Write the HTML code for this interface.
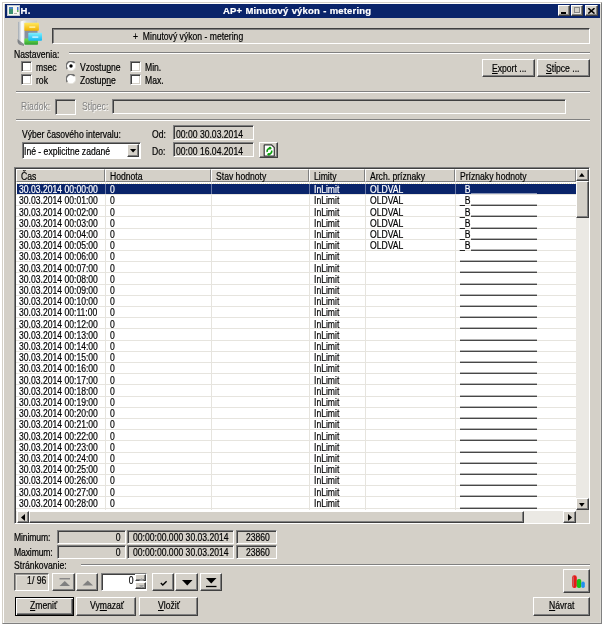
<!DOCTYPE html>
<html><head><meta charset="utf-8"><style>
html,body{margin:0;padding:0;background:#fff;width:604px;height:626px;overflow:hidden}
.a{position:absolute;box-sizing:border-box}
.t{margin-top:1px;font-family:"Liberation Sans",sans-serif;font-size:10px;line-height:12px;white-space:nowrap;color:#000;transform:scaleX(0.86);transform-origin:0 50%;-webkit-text-stroke:0.2px currentColor}
.t.r{transform-origin:100% 50%}
u{text-decoration:underline;text-underline-offset:1px;text-decoration-thickness:1px}
.win{background:#d4d0c8;border:1px solid;border-color:#d4d0c8 #808080 #808080 #d4d0c8;box-shadow:inset 1px 1px #fff, inset -1px -1px #dcdad4}
.title{background:#0a246a}
.raised{background:#d4d0c8;border:1px solid;border-color:#fff #404040 #404040 #fff;box-shadow:inset -1px -1px #808080}
.tb{border-color:#fff #404040 #404040 #fff;box-shadow:inset -1px -1px #808080}
.defbtn{background:#d4d0c8;border:1px solid #000;box-shadow:inset 1px 1px #fff, inset -1px -1px #404040, inset -2px -2px #808080}
.sunken{background:#d4d0c8;border:1px solid;border-color:#808080 #fff #fff #808080;box-shadow:inset 1px 1px #404040}
.static{background:#d4d0c8;border:1px solid;border-color:#404040 #fff #fff #404040;box-shadow:inset 1px 1px #808080}
.static2{background:#d4d0c8;border:1px solid;border-color:#5c5c5c #fff #fff #5c5c5c;box-shadow:inset 1px 1px #9a9894, inset 2px 2px #e8e6e0}
.etch{border-top:1px solid #808080;border-bottom:1px solid #fff}
.chk{background:#fff;border:1px solid;border-color:#808080 #fff #fff #808080;box-shadow:inset 1px 1px #404040, inset -1px -1px #d4d0c8}
.hdr{background:#d4d0c8;border:1px solid;border-color:#fff #808080 #808080 #fff;box-shadow:inset -0px -0px #404040}
</style></head>
<body><div style="position:absolute;left:0;top:0;width:604px;height:626px;will-change:transform">
<div class="a win" style="left:2px;top:2px;width:600px;height:622px;"></div>
<div class="a title" style="left:5px;top:4px;width:595px;height:14px;"></div>
<svg class="a" style="left:7px;top:5px" width="13" height="11" viewBox="0 0 13 11">
<rect x="0.5" y="0.5" width="12" height="10" fill="#f6f6f0" stroke="#c0c8d0"/>
<rect x="2" y="2" width="4" height="7" fill="#3a9070"/><rect x="2" y="2" width="4" height="2" fill="#4a80c0"/>
<rect x="10" y="2" width="1.5" height="3" fill="#4070d0"/><rect x="10" y="5" width="1.5" height="2" fill="#60b060"/>
<rect x="7" y="8" width="3" height="1" fill="#b0b0b0"/></svg>
<div class="a t " style="left:20.5px;top:4.00px;color:#fff;font-weight:bold;font-size:9.5px;transform:none;letter-spacing:0.3px">H.</div>
<div class="a t " style="left:223px;top:4.00px;color:#fff;font-weight:bold;font-size:9.5px;transform:none;letter-spacing:0.15px;word-spacing:0.5px">AP+ Minutový výkon - metering</div>
<div class="a raised tb" style="left:558px;top:5px;width:12px;height:11px;"><div class="a" style="left:2.3px;top:6px;width:5px;height:1.8px;background:#000"></div></div>
<div class="a raised tb" style="left:571px;top:5px;width:12px;height:11px;"><div class="a" style="left:1.8px;top:1.2px;width:6.7px;height:6.3px;border:1px solid #888;border-top-width:1.5px;box-shadow:0.6px 0.6px #fff"></div></div>
<div class="a raised tb" style="left:585px;top:5px;width:13px;height:11px;"><svg class="a" style="left:2.2px;top:2.2px" width="7" height="6" viewBox="0 0 7 6"><path d="M0.3 0.2 L6.5 5.6 M6.5 0.2 L0.3 5.6" stroke="#000" stroke-width="1.5"/></svg></div>
<svg class="a" style="left:0px;top:0px" width="50" height="50" viewBox="0 0 50 50">
<defs>
<linearGradient id="cab" x1="0" x2="1"><stop offset="0" stop-color="#a0a8b0"/><stop offset="0.2" stop-color="#ffffff"/><stop offset="0.45" stop-color="#d8dce0"/><stop offset="1" stop-color="#c0c6cc"/></linearGradient>
<linearGradient id="yel" x1="0" y1="0" x2="0" y2="1"><stop offset="0" stop-color="#ffe860"/><stop offset="1" stop-color="#f0b000"/></linearGradient>
<linearGradient id="cya" x1="0" y1="0" x2="0" y2="1"><stop offset="0" stop-color="#80f0ff"/><stop offset="1" stop-color="#10b8f0"/></linearGradient>
<linearGradient id="grn" x1="0" y1="0" x2="0" y2="1"><stop offset="0" stop-color="#70e050"/><stop offset="1" stop-color="#30a030"/></linearGradient>
</defs>
<path d="M18 22 L24 20.5 L37 20.5 L37 44 L24 45.5 L18 43.5 Z" fill="url(#cab)"/>
<rect x="24.5" y="30" width="13" height="9" fill="#8890a0"/><path d="M17.5 39 L20 41 L24 44 L24 46 L19 44.5 L17.5 42 Z" fill="#707478" opacity="0.8"/>
<rect x="24.3" y="22.8" width="14.6" height="8" rx="0.8" fill="url(#yel)"/>
<rect x="29.3" y="26.3" width="6" height="1.6" fill="#fff0a0"/>
<rect x="24.3" y="38.6" width="13.7" height="6.1" rx="0.8" fill="url(#grn)"/>
<rect x="28.3" y="32.8" width="13.7" height="8" rx="0.8" fill="url(#cya)"/>
<rect x="32.3" y="36.3" width="6" height="1.6" fill="#c0f0ff"/>
</svg>
<div class="a static" style="left:52px;top:28px;width:538px;height:16px;"></div>
<div class="a t " style="left:133px;top:29.50px;">+&nbsp; Minutový výkon - metering</div>
<div class="a t " style="left:14px;top:48.00px;">Nastavenia:</div>
<div class="a etch" style="left:69px;top:52px;width:521px;height:2px;"></div>
<div class="a chk" style="left:21px;top:61px;width:11px;height:11px;"></div>
<div class="a chk" style="left:21px;top:74px;width:11px;height:11px;"></div>
<div class="a chk" style="left:130px;top:61px;width:11px;height:11px;"></div>
<div class="a chk" style="left:130px;top:74px;width:11px;height:11px;"></div>
<div class="a t " style="left:36px;top:60.50px;">msec</div>
<div class="a t " style="left:36px;top:73.50px;">rok</div>
<div class="a t " style="left:144.5px;top:60.50px;">Min.</div>
<div class="a t " style="left:144.5px;top:73.50px;">Max.</div>
<svg class="a" style="left:65.5px;top:61px" width="10" height="10" viewBox="0 0 10 10">
<circle cx="5" cy="5" r="4.6" fill="#fff"/>
<path d="M8.6 2.0 A4.5 4.5 0 0 0 1.4 8.0" fill="none" stroke="#707070" stroke-width="1.6"/>
<path d="M1.4 8.0 A4.5 4.5 0 0 0 8.6 2.0" fill="none" stroke="#e8e6e0" stroke-width="1.0"/>
<circle cx="5" cy="5" r="1.7" fill="#000"/></svg>
<svg class="a" style="left:65.5px;top:74px" width="10" height="10" viewBox="0 0 10 10">
<circle cx="5" cy="5" r="4.6" fill="#fff"/>
<path d="M8.6 2.0 A4.5 4.5 0 0 0 1.4 8.0" fill="none" stroke="#707070" stroke-width="1.6"/>
<path d="M1.4 8.0 A4.5 4.5 0 0 0 8.6 2.0" fill="none" stroke="#e8e6e0" stroke-width="1.0"/>
</svg>
<div class="a t " style="left:79.5px;top:60.50px;">Vzostu<u>p</u>ne</div>
<div class="a t " style="left:79.5px;top:73.50px;">Zostup<u>n</u>e</div>
<div class="a raised" style="left:482px;top:59px;width:53px;height:18px;"><div class="a t" style="left:8.5px;top:1.5px"><u>E</u>xport ...</div></div>
<div class="a raised" style="left:537px;top:59px;width:53px;height:18px;"><div class="a t" style="left:8px;top:1.5px"><u>S</u>tĺpce ...</div></div>
<div class="a etch" style="left:16px;top:91px;width:574px;height:2px;"></div>
<div class="a etch" style="left:16px;top:119px;width:574px;height:2px;"></div>
<div class="a t " style="left:21.3px;top:100.00px;color:#808080;text-shadow:1px 1px #fff;-webkit-text-stroke:0">Riadok:</div>
<div class="a sunken" style="left:55px;top:98.5px;width:21px;height:16.0px;"></div>
<div class="a t " style="left:81.6px;top:100.00px;color:#808080;text-shadow:1px 1px #fff;-webkit-text-stroke:0">Stĺpec:</div>
<div class="a sunken" style="left:112.3px;top:98.5px;width:453.7px;height:15.8px;"></div>
<div class="a t " style="left:22px;top:128.30px;">Výber časového intervalu:</div>
<div class="a sunken" style="left:21.5px;top:142px;width:119.0px;height:16.5px;background:#fff"><div class="a t" style="left:1.5px;top:1.8px">Iné - explicitne zadané</div></div>
<div class="a raised" style="left:126.5px;top:143.5px;width:12.5px;height:13.5px;"><svg class="a" style="left:2.2px;top:4.5px" width="7" height="4"><path d="M0 0 L6.2 0 L3.1 3.6 Z" fill="#000"/></svg></div>
<div class="a t " style="left:152px;top:127.50px;">Od:</div>
<div class="a t " style="left:152px;top:144.50px;">Do:</div>
<div class="a sunken" style="left:173px;top:125px;width:81px;height:15px;"><div class="a t" style="left:1.5px;top:1.5px">00:00 30.03.2014</div></div>
<div class="a sunken" style="left:173px;top:142px;width:81px;height:15px;"><div class="a t" style="left:1.5px;top:1.5px">00:00 16.04.2014</div></div>
<div class="a raised" style="left:259px;top:142px;width:19px;height:16px;"><svg class="a" style="left:3px;top:1px" width="13" height="13" viewBox="0 0 13 13">
<path d="M1.2 1.2 Q1.2 0.8 1.8 0.8 L8.5 0.8 L11.3 3.6 L11.3 11.6 Q11.3 12.2 10.7 12.2 L1.8 12.2 Q1.2 12.2 1.2 11.6 Z" fill="#fff" stroke="#383838" stroke-width="1.2"/>
<path d="M4.2 8 Q3.6 5 6.6 4.2" fill="none" stroke="#10a010" stroke-width="1.5"/><circle cx="7" cy="4.2" r="1.4" fill="#10a010"/>
<path d="M8.8 6.5 Q9.2 9.2 6.2 10.2" fill="none" stroke="#10a010" stroke-width="1.5"/><circle cx="5.8" cy="10.3" r="1.4" fill="#10a010"/></svg></div>
<div class="a sunken" style="left:14px;top:167px;width:576px;height:357px;background:#fff"></div>
<div class="a hdr" style="left:16px;top:168.5px;width:89px;height:13.5px;"><div class="a t" style="left:4px;top:0px">Čas</div></div>
<div class="a hdr" style="left:105px;top:168.5px;width:106px;height:13.5px;"><div class="a t" style="left:4px;top:0px">Hodnota</div></div>
<div class="a hdr" style="left:211px;top:168.5px;width:98px;height:13.5px;"><div class="a t" style="left:4px;top:0px">Stav hodnoty</div></div>
<div class="a hdr" style="left:309px;top:168.5px;width:56px;height:13.5px;"><div class="a t" style="left:4px;top:0px">Limity</div></div>
<div class="a hdr" style="left:365px;top:168.5px;width:90px;height:13.5px;"><div class="a t" style="left:4px;top:0px">Arch. príznaky</div></div>
<div class="a hdr" style="left:455px;top:168.5px;width:121px;height:13.5px;"><div class="a t" style="left:4px;top:0px">Príznaky hodnoty</div></div>
<div class="a " style="left:16px;top:194px;width:560px;height:1px;background:#e6e4de"></div>
<div class="a " style="left:16px;top:205px;width:560px;height:1px;background:#e6e4de"></div>
<div class="a " style="left:16px;top:216px;width:560px;height:1px;background:#e6e4de"></div>
<div class="a " style="left:16px;top:228px;width:560px;height:1px;background:#e6e4de"></div>
<div class="a " style="left:16px;top:239px;width:560px;height:1px;background:#e6e4de"></div>
<div class="a " style="left:16px;top:250px;width:560px;height:1px;background:#e6e4de"></div>
<div class="a " style="left:16px;top:261px;width:560px;height:1px;background:#e6e4de"></div>
<div class="a " style="left:16px;top:272px;width:560px;height:1px;background:#e6e4de"></div>
<div class="a " style="left:16px;top:284px;width:560px;height:1px;background:#e6e4de"></div>
<div class="a " style="left:16px;top:295px;width:560px;height:1px;background:#e6e4de"></div>
<div class="a " style="left:16px;top:306px;width:560px;height:1px;background:#e6e4de"></div>
<div class="a " style="left:16px;top:317px;width:560px;height:1px;background:#e6e4de"></div>
<div class="a " style="left:16px;top:328px;width:560px;height:1px;background:#e6e4de"></div>
<div class="a " style="left:16px;top:340px;width:560px;height:1px;background:#e6e4de"></div>
<div class="a " style="left:16px;top:351px;width:560px;height:1px;background:#e6e4de"></div>
<div class="a " style="left:16px;top:362px;width:560px;height:1px;background:#e6e4de"></div>
<div class="a " style="left:16px;top:373px;width:560px;height:1px;background:#e6e4de"></div>
<div class="a " style="left:16px;top:384px;width:560px;height:1px;background:#e6e4de"></div>
<div class="a " style="left:16px;top:396px;width:560px;height:1px;background:#e6e4de"></div>
<div class="a " style="left:16px;top:407px;width:560px;height:1px;background:#e6e4de"></div>
<div class="a " style="left:16px;top:418px;width:560px;height:1px;background:#e6e4de"></div>
<div class="a " style="left:16px;top:429px;width:560px;height:1px;background:#e6e4de"></div>
<div class="a " style="left:16px;top:440px;width:560px;height:1px;background:#e6e4de"></div>
<div class="a " style="left:16px;top:452px;width:560px;height:1px;background:#e6e4de"></div>
<div class="a " style="left:16px;top:463px;width:560px;height:1px;background:#e6e4de"></div>
<div class="a " style="left:16px;top:474px;width:560px;height:1px;background:#e6e4de"></div>
<div class="a " style="left:16px;top:485px;width:560px;height:1px;background:#e6e4de"></div>
<div class="a " style="left:16px;top:496px;width:560px;height:1px;background:#e6e4de"></div>
<div class="a " style="left:16px;top:508px;width:560px;height:1px;background:#e6e4de"></div>
<div class="a " style="left:105px;top:182px;width:1px;height:328px;background:#e6e4de"></div>
<div class="a " style="left:211px;top:182px;width:1px;height:328px;background:#e6e4de"></div>
<div class="a " style="left:309px;top:182px;width:1px;height:328px;background:#e6e4de"></div>
<div class="a " style="left:365px;top:182px;width:1px;height:328px;background:#e6e4de"></div>
<div class="a " style="left:455px;top:182px;width:1px;height:328px;background:#e6e4de"></div>
<div class="a " style="left:17px;top:183.5px;width:559px;height:10.5px;background:#0a246a"></div>
<div class="a " style="left:17px;top:183px;width:559px;height:1px;border-top:1px dotted #e8e0c0"></div>
<div class="a " style="left:470.5px;top:192.5px;width:66.5px;height:1.0px;background:#8a96b8"></div>
<div class="a " style="left:105px;top:184px;width:1px;height:10px;background:#6a7aa8"></div>
<div class="a " style="left:211px;top:184px;width:1px;height:10px;background:#6a7aa8"></div>
<div class="a " style="left:309px;top:184px;width:1px;height:10px;background:#6a7aa8"></div>
<div class="a " style="left:365px;top:184px;width:1px;height:10px;background:#6a7aa8"></div>
<div class="a " style="left:455px;top:184px;width:1px;height:10px;background:#6a7aa8"></div>
<div class="a t " style="left:19px;top:183.10px;color:#fff">30.03.2014 00:00:00</div>
<div class="a t " style="left:110px;top:183.10px;color:#fff">0</div>
<div class="a t " style="left:313.5px;top:183.10px;color:#fff">InLimit</div>
<div class="a t " style="left:369.5px;top:183.10px;color:#fff">OLDVAL</div>
<div class="a t " style="left:460px;top:183.10px;color:#fff">_B</div>
<div class="a t " style="left:19px;top:194.30px;color:#000">30.03.2014 00:01:00</div>
<div class="a t " style="left:110px;top:194.30px;color:#000">0</div>
<div class="a t " style="left:313.5px;top:194.30px;color:#000">InLimit</div>
<div class="a t " style="left:369.5px;top:194.30px;color:#000">OLDVAL</div>
<div class="a t " style="left:460px;top:194.30px;color:#000">_B</div>
<div class="a " style="left:470.5px;top:205px;width:66.5px;height:1px;background:#484848"></div>
<div class="a " style="left:470.5px;top:204px;width:66.5px;height:1px;background:#b4b4b4"></div>
<div class="a t " style="left:19px;top:205.50px;color:#000">30.03.2014 00:02:00</div>
<div class="a t " style="left:110px;top:205.50px;color:#000">0</div>
<div class="a t " style="left:313.5px;top:205.50px;color:#000">InLimit</div>
<div class="a t " style="left:369.5px;top:205.50px;color:#000">OLDVAL</div>
<div class="a t " style="left:460px;top:205.50px;color:#000">_B</div>
<div class="a " style="left:470.5px;top:216px;width:66.5px;height:1px;background:#484848"></div>
<div class="a " style="left:470.5px;top:215px;width:66.5px;height:1px;background:#b4b4b4"></div>
<div class="a t " style="left:19px;top:216.70px;color:#000">30.03.2014 00:03:00</div>
<div class="a t " style="left:110px;top:216.70px;color:#000">0</div>
<div class="a t " style="left:313.5px;top:216.70px;color:#000">InLimit</div>
<div class="a t " style="left:369.5px;top:216.70px;color:#000">OLDVAL</div>
<div class="a t " style="left:460px;top:216.70px;color:#000">_B</div>
<div class="a " style="left:470.5px;top:228px;width:66.5px;height:1px;background:#484848"></div>
<div class="a " style="left:470.5px;top:227px;width:66.5px;height:1px;background:#b4b4b4"></div>
<div class="a t " style="left:19px;top:227.90px;color:#000">30.03.2014 00:04:00</div>
<div class="a t " style="left:110px;top:227.90px;color:#000">0</div>
<div class="a t " style="left:313.5px;top:227.90px;color:#000">InLimit</div>
<div class="a t " style="left:369.5px;top:227.90px;color:#000">OLDVAL</div>
<div class="a t " style="left:460px;top:227.90px;color:#000">_B</div>
<div class="a " style="left:470.5px;top:239px;width:66.5px;height:1px;background:#484848"></div>
<div class="a " style="left:470.5px;top:238px;width:66.5px;height:1px;background:#b4b4b4"></div>
<div class="a t " style="left:19px;top:239.10px;color:#000">30.03.2014 00:05:00</div>
<div class="a t " style="left:110px;top:239.10px;color:#000">0</div>
<div class="a t " style="left:313.5px;top:239.10px;color:#000">InLimit</div>
<div class="a t " style="left:369.5px;top:239.10px;color:#000">OLDVAL</div>
<div class="a t " style="left:460px;top:239.10px;color:#000">_B</div>
<div class="a " style="left:470.5px;top:250px;width:66.5px;height:1px;background:#484848"></div>
<div class="a " style="left:470.5px;top:249px;width:66.5px;height:1px;background:#b4b4b4"></div>
<div class="a t " style="left:19px;top:250.30px;color:#000">30.03.2014 00:06:00</div>
<div class="a t " style="left:110px;top:250.30px;color:#000">0</div>
<div class="a t " style="left:313.5px;top:250.30px;color:#000">InLimit</div>
<div class="a " style="left:460px;top:261px;width:77px;height:1px;background:#484848"></div>
<div class="a " style="left:460px;top:260px;width:77px;height:1px;background:#b4b4b4"></div>
<div class="a t " style="left:19px;top:261.50px;color:#000">30.03.2014 00:07:00</div>
<div class="a t " style="left:110px;top:261.50px;color:#000">0</div>
<div class="a t " style="left:313.5px;top:261.50px;color:#000">InLimit</div>
<div class="a " style="left:460px;top:272px;width:77px;height:1px;background:#484848"></div>
<div class="a " style="left:460px;top:271px;width:77px;height:1px;background:#b4b4b4"></div>
<div class="a t " style="left:19px;top:272.70px;color:#000">30.03.2014 00:08:00</div>
<div class="a t " style="left:110px;top:272.70px;color:#000">0</div>
<div class="a t " style="left:313.5px;top:272.70px;color:#000">InLimit</div>
<div class="a " style="left:460px;top:284px;width:77px;height:1px;background:#484848"></div>
<div class="a " style="left:460px;top:283px;width:77px;height:1px;background:#b4b4b4"></div>
<div class="a t " style="left:19px;top:283.90px;color:#000">30.03.2014 00:09:00</div>
<div class="a t " style="left:110px;top:283.90px;color:#000">0</div>
<div class="a t " style="left:313.5px;top:283.90px;color:#000">InLimit</div>
<div class="a " style="left:460px;top:295px;width:77px;height:1px;background:#484848"></div>
<div class="a " style="left:460px;top:294px;width:77px;height:1px;background:#b4b4b4"></div>
<div class="a t " style="left:19px;top:295.10px;color:#000">30.03.2014 00:10:00</div>
<div class="a t " style="left:110px;top:295.10px;color:#000">0</div>
<div class="a t " style="left:313.5px;top:295.10px;color:#000">InLimit</div>
<div class="a " style="left:460px;top:306px;width:77px;height:1px;background:#484848"></div>
<div class="a " style="left:460px;top:305px;width:77px;height:1px;background:#b4b4b4"></div>
<div class="a t " style="left:19px;top:306.30px;color:#000">30.03.2014 00:11:00</div>
<div class="a t " style="left:110px;top:306.30px;color:#000">0</div>
<div class="a t " style="left:313.5px;top:306.30px;color:#000">InLimit</div>
<div class="a " style="left:460px;top:317px;width:77px;height:1px;background:#484848"></div>
<div class="a " style="left:460px;top:316px;width:77px;height:1px;background:#b4b4b4"></div>
<div class="a t " style="left:19px;top:317.50px;color:#000">30.03.2014 00:12:00</div>
<div class="a t " style="left:110px;top:317.50px;color:#000">0</div>
<div class="a t " style="left:313.5px;top:317.50px;color:#000">InLimit</div>
<div class="a " style="left:460px;top:328px;width:77px;height:1px;background:#484848"></div>
<div class="a " style="left:460px;top:327px;width:77px;height:1px;background:#b4b4b4"></div>
<div class="a t " style="left:19px;top:328.70px;color:#000">30.03.2014 00:13:00</div>
<div class="a t " style="left:110px;top:328.70px;color:#000">0</div>
<div class="a t " style="left:313.5px;top:328.70px;color:#000">InLimit</div>
<div class="a " style="left:460px;top:340px;width:77px;height:1px;background:#484848"></div>
<div class="a " style="left:460px;top:339px;width:77px;height:1px;background:#b4b4b4"></div>
<div class="a t " style="left:19px;top:339.90px;color:#000">30.03.2014 00:14:00</div>
<div class="a t " style="left:110px;top:339.90px;color:#000">0</div>
<div class="a t " style="left:313.5px;top:339.90px;color:#000">InLimit</div>
<div class="a " style="left:460px;top:351px;width:77px;height:1px;background:#484848"></div>
<div class="a " style="left:460px;top:350px;width:77px;height:1px;background:#b4b4b4"></div>
<div class="a t " style="left:19px;top:351.10px;color:#000">30.03.2014 00:15:00</div>
<div class="a t " style="left:110px;top:351.10px;color:#000">0</div>
<div class="a t " style="left:313.5px;top:351.10px;color:#000">InLimit</div>
<div class="a " style="left:460px;top:362px;width:77px;height:1px;background:#484848"></div>
<div class="a " style="left:460px;top:361px;width:77px;height:1px;background:#b4b4b4"></div>
<div class="a t " style="left:19px;top:362.30px;color:#000">30.03.2014 00:16:00</div>
<div class="a t " style="left:110px;top:362.30px;color:#000">0</div>
<div class="a t " style="left:313.5px;top:362.30px;color:#000">InLimit</div>
<div class="a " style="left:460px;top:373px;width:77px;height:1px;background:#484848"></div>
<div class="a " style="left:460px;top:372px;width:77px;height:1px;background:#b4b4b4"></div>
<div class="a t " style="left:19px;top:373.50px;color:#000">30.03.2014 00:17:00</div>
<div class="a t " style="left:110px;top:373.50px;color:#000">0</div>
<div class="a t " style="left:313.5px;top:373.50px;color:#000">InLimit</div>
<div class="a " style="left:460px;top:384px;width:77px;height:1px;background:#484848"></div>
<div class="a " style="left:460px;top:383px;width:77px;height:1px;background:#b4b4b4"></div>
<div class="a t " style="left:19px;top:384.70px;color:#000">30.03.2014 00:18:00</div>
<div class="a t " style="left:110px;top:384.70px;color:#000">0</div>
<div class="a t " style="left:313.5px;top:384.70px;color:#000">InLimit</div>
<div class="a " style="left:460px;top:396px;width:77px;height:1px;background:#484848"></div>
<div class="a " style="left:460px;top:395px;width:77px;height:1px;background:#b4b4b4"></div>
<div class="a t " style="left:19px;top:395.90px;color:#000">30.03.2014 00:19:00</div>
<div class="a t " style="left:110px;top:395.90px;color:#000">0</div>
<div class="a t " style="left:313.5px;top:395.90px;color:#000">InLimit</div>
<div class="a " style="left:460px;top:407px;width:77px;height:1px;background:#484848"></div>
<div class="a " style="left:460px;top:406px;width:77px;height:1px;background:#b4b4b4"></div>
<div class="a t " style="left:19px;top:407.10px;color:#000">30.03.2014 00:20:00</div>
<div class="a t " style="left:110px;top:407.10px;color:#000">0</div>
<div class="a t " style="left:313.5px;top:407.10px;color:#000">InLimit</div>
<div class="a " style="left:460px;top:418px;width:77px;height:1px;background:#484848"></div>
<div class="a " style="left:460px;top:417px;width:77px;height:1px;background:#b4b4b4"></div>
<div class="a t " style="left:19px;top:418.30px;color:#000">30.03.2014 00:21:00</div>
<div class="a t " style="left:110px;top:418.30px;color:#000">0</div>
<div class="a t " style="left:313.5px;top:418.30px;color:#000">InLimit</div>
<div class="a " style="left:460px;top:429px;width:77px;height:1px;background:#484848"></div>
<div class="a " style="left:460px;top:428px;width:77px;height:1px;background:#b4b4b4"></div>
<div class="a t " style="left:19px;top:429.50px;color:#000">30.03.2014 00:22:00</div>
<div class="a t " style="left:110px;top:429.50px;color:#000">0</div>
<div class="a t " style="left:313.5px;top:429.50px;color:#000">InLimit</div>
<div class="a " style="left:460px;top:440px;width:77px;height:1px;background:#484848"></div>
<div class="a " style="left:460px;top:439px;width:77px;height:1px;background:#b4b4b4"></div>
<div class="a t " style="left:19px;top:440.70px;color:#000">30.03.2014 00:23:00</div>
<div class="a t " style="left:110px;top:440.70px;color:#000">0</div>
<div class="a t " style="left:313.5px;top:440.70px;color:#000">InLimit</div>
<div class="a " style="left:460px;top:452px;width:77px;height:1px;background:#484848"></div>
<div class="a " style="left:460px;top:451px;width:77px;height:1px;background:#b4b4b4"></div>
<div class="a t " style="left:19px;top:451.90px;color:#000">30.03.2014 00:24:00</div>
<div class="a t " style="left:110px;top:451.90px;color:#000">0</div>
<div class="a t " style="left:313.5px;top:451.90px;color:#000">InLimit</div>
<div class="a " style="left:460px;top:463px;width:77px;height:1px;background:#484848"></div>
<div class="a " style="left:460px;top:462px;width:77px;height:1px;background:#b4b4b4"></div>
<div class="a t " style="left:19px;top:463.10px;color:#000">30.03.2014 00:25:00</div>
<div class="a t " style="left:110px;top:463.10px;color:#000">0</div>
<div class="a t " style="left:313.5px;top:463.10px;color:#000">InLimit</div>
<div class="a " style="left:460px;top:474px;width:77px;height:1px;background:#484848"></div>
<div class="a " style="left:460px;top:473px;width:77px;height:1px;background:#b4b4b4"></div>
<div class="a t " style="left:19px;top:474.30px;color:#000">30.03.2014 00:26:00</div>
<div class="a t " style="left:110px;top:474.30px;color:#000">0</div>
<div class="a t " style="left:313.5px;top:474.30px;color:#000">InLimit</div>
<div class="a " style="left:460px;top:485px;width:77px;height:1px;background:#484848"></div>
<div class="a " style="left:460px;top:484px;width:77px;height:1px;background:#b4b4b4"></div>
<div class="a t " style="left:19px;top:485.50px;color:#000">30.03.2014 00:27:00</div>
<div class="a t " style="left:110px;top:485.50px;color:#000">0</div>
<div class="a t " style="left:313.5px;top:485.50px;color:#000">InLimit</div>
<div class="a " style="left:460px;top:496px;width:77px;height:1px;background:#484848"></div>
<div class="a " style="left:460px;top:495px;width:77px;height:1px;background:#b4b4b4"></div>
<div class="a t " style="left:19px;top:496.70px;color:#000">30.03.2014 00:28:00</div>
<div class="a t " style="left:110px;top:496.70px;color:#000">0</div>
<div class="a t " style="left:313.5px;top:496.70px;color:#000">InLimit</div>
<div class="a " style="left:460px;top:508px;width:77px;height:1px;background:#484848"></div>
<div class="a " style="left:460px;top:507px;width:77px;height:1px;background:#b4b4b4"></div>
<div class="a " style="left:576px;top:168.5px;width:12.6px;height:341.5px;background:#ebe9e4"></div>
<div class="a raised" style="left:576px;top:168.5px;width:12.6px;height:12.5px;"><svg class="a" style="left:2px;top:3.5px" width="6" height="4"><path d="M0 3.7 L5.6 3.7 L2.8 0 Z" fill="#000"/></svg></div>
<div class="a raised" style="left:576px;top:181px;width:12.6px;height:36.5px;"></div>
<div class="a raised" style="left:576px;top:498px;width:12.6px;height:12px;"><svg class="a" style="left:2px;top:4px" width="6" height="4"><path d="M0 0 L5.6 0 L2.8 3.7 Z" fill="#000"/></svg></div>
<div class="a " style="left:16px;top:510.5px;width:560px;height:12.0px;background:#ebe9e4"></div>
<div class="a raised" style="left:17px;top:510.5px;width:11.5px;height:12.0px;"><svg class="a" style="left:2.5px;top:2.5px" width="4" height="7"><path d="M4 0 L4 7 L0 3.5 Z" fill="#000"/></svg></div>
<div class="a raised" style="left:28.5px;top:510.5px;width:495.0px;height:12.0px;"></div>
<div class="a raised" style="left:563px;top:510.5px;width:12.5px;height:12.0px;"><svg class="a" style="left:4px;top:2.5px" width="4" height="7"><path d="M0 0 L0 7 L4 3.5 Z" fill="#000"/></svg></div>
<div class="a " style="left:576px;top:510px;width:12.6px;height:12.5px;background:#d4d0c8"></div>
<div class="a t " style="left:14.4px;top:531.40px;letter-spacing:-0.15px">Minimum:</div>
<div class="a t " style="left:14.4px;top:545.50px;letter-spacing:-0.15px">Maximum:</div>
<div class="a sunken" style="left:57px;top:530px;width:68.5px;height:13.5px;"><div class="a t r" style="right:4px;top:0.3px">0</div></div>
<div class="a sunken" style="left:127px;top:530px;width:107px;height:13.5px;"><div class="a t" style="left:4.5px;top:0.3px">00:00:00.000 30.03.2014</div></div>
<div class="a sunken" style="left:236px;top:530px;width:41px;height:13.5px;"><div class="a t r" style="right:6px;top:0.3px">23860</div></div>
<div class="a sunken" style="left:57px;top:545px;width:68.5px;height:13.5px;"><div class="a t r" style="right:4px;top:0.3px">0</div></div>
<div class="a sunken" style="left:127px;top:545px;width:107px;height:13.5px;"><div class="a t" style="left:4.5px;top:0.3px">00:00:00.000 30.03.2014</div></div>
<div class="a sunken" style="left:236px;top:545px;width:41px;height:13.5px;"><div class="a t r" style="right:6px;top:0.3px">23860</div></div>
<div class="a t " style="left:14.4px;top:559.30px;">Stránkovanie:</div>
<div class="a etch" style="left:81px;top:563.8px;width:509px;height:2.0px;"></div>
<div class="a static2" style="left:14px;top:573px;width:35px;height:17.5px;"><div class="a t r" style="right:2px;top:-0.3px">1/ 96</div></div>
<div class="a raised" style="left:52px;top:573px;width:23px;height:17.5px;"><svg class="a" style="left:5.5px;top:4px" width="12" height="9"><path d="M0.5 0.75 L11 0.75" stroke="#808080" stroke-width="1.3"/><path d="M0.5 8 L11 8 L5.75 3 Z" fill="#808080"/></svg></div>
<div class="a raised" style="left:76px;top:573px;width:22px;height:17.5px;"><svg class="a" style="left:5px;top:5.5px" width="12" height="6"><path d="M0.5 5.5 L11 5.5 L5.75 0.5 Z" fill="#808080"/></svg></div>
<div class="a sunken" style="left:100.5px;top:573px;width:46.5px;height:17.5px;background:#fff"><div class="a t r" style="right:12.5px;top:-0.2px">0</div></div>
<div class="a raised" style="left:135.2px;top:574.3px;width:11.3px;height:7.0px;"><svg class="a" style="left:2.5px;top:2.5px" width="5" height="3"><path d="M0 3 L5 3 L2.5 0 Z" fill="#a0a0a0"/></svg></div>
<div class="a raised" style="left:135.2px;top:582px;width:11.3px;height:7.3px;"><svg class="a" style="left:2.5px;top:2px" width="5" height="3"><path d="M0 0 L5 0 L2.5 3 Z" fill="#a0a0a0"/></svg></div>
<div class="a raised" style="left:151.5px;top:573px;width:22.5px;height:17.5px;"><svg class="a" style="left:7px;top:5.5px" width="8" height="7"><path d="M0.8 3.0 L2.8 5.0 L6.6 1.2" fill="none" stroke="#000" stroke-width="1.4"/></svg></div>
<div class="a raised" style="left:175px;top:573px;width:23px;height:17.5px;"><svg class="a" style="left:5.5px;top:5.5px" width="11" height="6"><path d="M0 0 L10.5 0 L5.25 5.5 Z" fill="#000"/></svg></div>
<div class="a raised" style="left:199.5px;top:573px;width:22.5px;height:17.5px;"><svg class="a" style="left:5.5px;top:4px" width="11" height="10"><path d="M0 0 L10.5 0 L5.25 5.5 Z" fill="#000"/><path d="M0 8.5 L10.5 8.5" stroke="#000" stroke-width="1.3"/></svg></div>
<div class="a raised" style="left:563px;top:569px;width:27px;height:24px;"><svg class="a" style="left:7px;top:4px" width="14" height="15"><rect x="1.2" y="1.3" width="4.6" height="12.6" rx="2.2" fill="#e81818"/><rect x="1.8" y="2.5" width="1.2" height="10" fill="#c06060"/><rect x="5.8" y="4.9" width="4.5" height="9" rx="2" fill="#18c018"/><rect x="10.3" y="7.6" width="3.5" height="6.3" rx="1.7" fill="#2090f0"/></svg></div>
<div class="a defbtn" style="left:15px;top:597px;width:58.5px;height:19px;"><div class="a t" style="left:13.5px;top:1px"><u>Z</u>meniť</div></div>
<div class="a raised" style="left:76px;top:597px;width:59.5px;height:19px;"><div class="a t" style="left:12.5px;top:1px">Vy<u>m</u>azať</div></div>
<div class="a raised" style="left:138.5px;top:597px;width:59.5px;height:19px;"><div class="a t" style="left:18px;top:1px"><u>V</u>ložiť</div></div>
<div class="a raised" style="left:533px;top:597px;width:57px;height:19px;"><div class="a t" style="left:14.5px;top:1px"><u>N</u>ávrat</div></div>
</div></body></html>
